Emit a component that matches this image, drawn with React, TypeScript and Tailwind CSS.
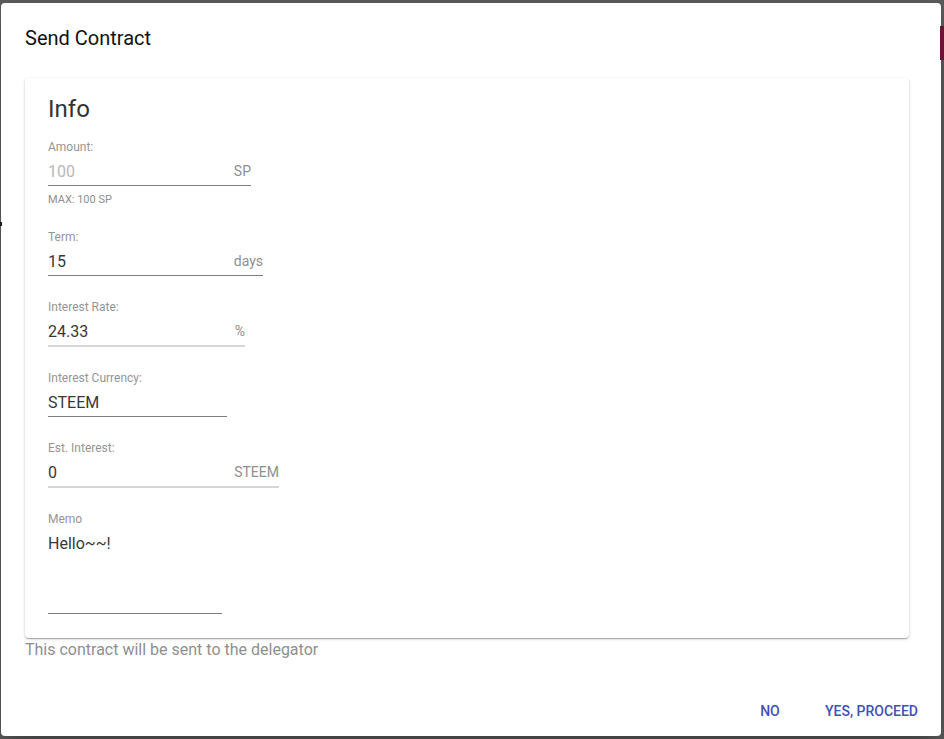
import React from 'react';

interface FieldProps {
  label: string;
  value: string;
  suffix?: string;
  width: string;
  muted?: boolean;
  faint?: boolean;
  helper?: string;
}

function Field({ label, value, suffix, width, muted, faint, helper }: FieldProps) {
  return (
    <div className="mb-[24px]">
      <div className="text-[12px] leading-[14px] text-[#959595]">{label}</div>
      <div
        className={`flex items-start pt-[8px] pb-[4px] ${width} ${
          faint ? 'border-b-2 border-[#d6d6d6] pb-[3px]' : 'border-b border-[#7d7d7d]'
        }`}
      >
        <span className={`flex-1 text-[16px] leading-[19px] ${muted ? 'text-[#b8b8b8]' : 'text-[#383838]'}`}>
          {value}
        </span>
        {suffix && <span className="text-[14px] leading-[19px] text-[#8f8f8f]">{suffix}</span>}
      </div>
      {helper && <div className="mt-[7px] -mb-[1px] text-[11px] leading-[14px] text-[#8f8f8f]">{helper}</div>}
    </div>
  );
}

export default function App() {
  return (
    <div
      className="relative h-[739px] w-[944px] overflow-hidden bg-[#5b5b5b] pl-[1px] pt-[3px]"
      style={{ fontFamily: 'Roboto, "Liberation Sans", sans-serif' }}
    >
      {/* background bits peeking out */}
      <div className="absolute right-0 top-[26px] h-[34px] w-[4px] bg-[#6a1432]" />
      <div className="absolute left-0 top-[222px] h-[4px] w-[2px] bg-[#1a1a1a]" />

      {/* Dialog */}
      <div className="flex h-[733px] w-[940px] flex-col rounded-[4px] bg-white shadow-[0_11px_15px_-7px_rgba(0,0,0,0.2),0_24px_38px_3px_rgba(0,0,0,0.14)]">
        <h2 className="px-[24px] pt-[19px] text-[20px] font-normal leading-[32px] text-[#111111]">Send Contract</h2>

        <div className="mt-[24px] px-[24px]">
          <div className="w-[884px] rounded-[4px] bg-white px-[23px] pb-[24px] pt-[15px] shadow-[0_1px_3px_0_rgba(0,0,0,0.2),0_1px_1px_0_rgba(0,0,0,0.14),0_2px_1px_-1px_rgba(0,0,0,0.12)]">
            <div className="mb-[15px] text-[24px] leading-[32px] text-[#333333]">Info</div>

            <Field label="Amount:" value="100" suffix="SP" width="w-[203px]" muted helper="MAX: 100 SP" />
            <Field label="Term:" value="15" suffix="days" width="w-[215px]" />
            <Field label="Interest Rate:" value="24.33" suffix="%" width="w-[197px]" faint />
            <Field label="Interest Currency:" value="STEEM" width="w-[179px]" />
            <Field label="Est. Interest:" value="0" suffix="STEEM" width="w-[231px]" faint />

            <div>
              <div className="text-[12px] leading-[14px] text-[#959595]">Memo</div>
              <div className="w-[174px] border-b border-[#7d7d7d] pb-[3px] pt-[8px]">
                <div className="h-[76px] text-[16px] leading-[19px] text-[#383838]">Hello~~!</div>
              </div>
            </div>
          </div>
          <p className="text-[16px] leading-[24px] text-[#8f8f8f]">This contract will be sent to the delegator</p>
        </div>

        <div className="mt-auto mb-[7px] flex items-center justify-end gap-[15px] pr-[15px]">
          <button className="h-[36px] w-[64px] text-center text-[14px] font-medium text-[#3f51b5]">NO</button>
          <button className="h-[36px] px-[8px] text-[14px] font-medium text-[#3f51b5]">YES, PROCEED</button>
        </div>
      </div>
    </div>
  );
}
